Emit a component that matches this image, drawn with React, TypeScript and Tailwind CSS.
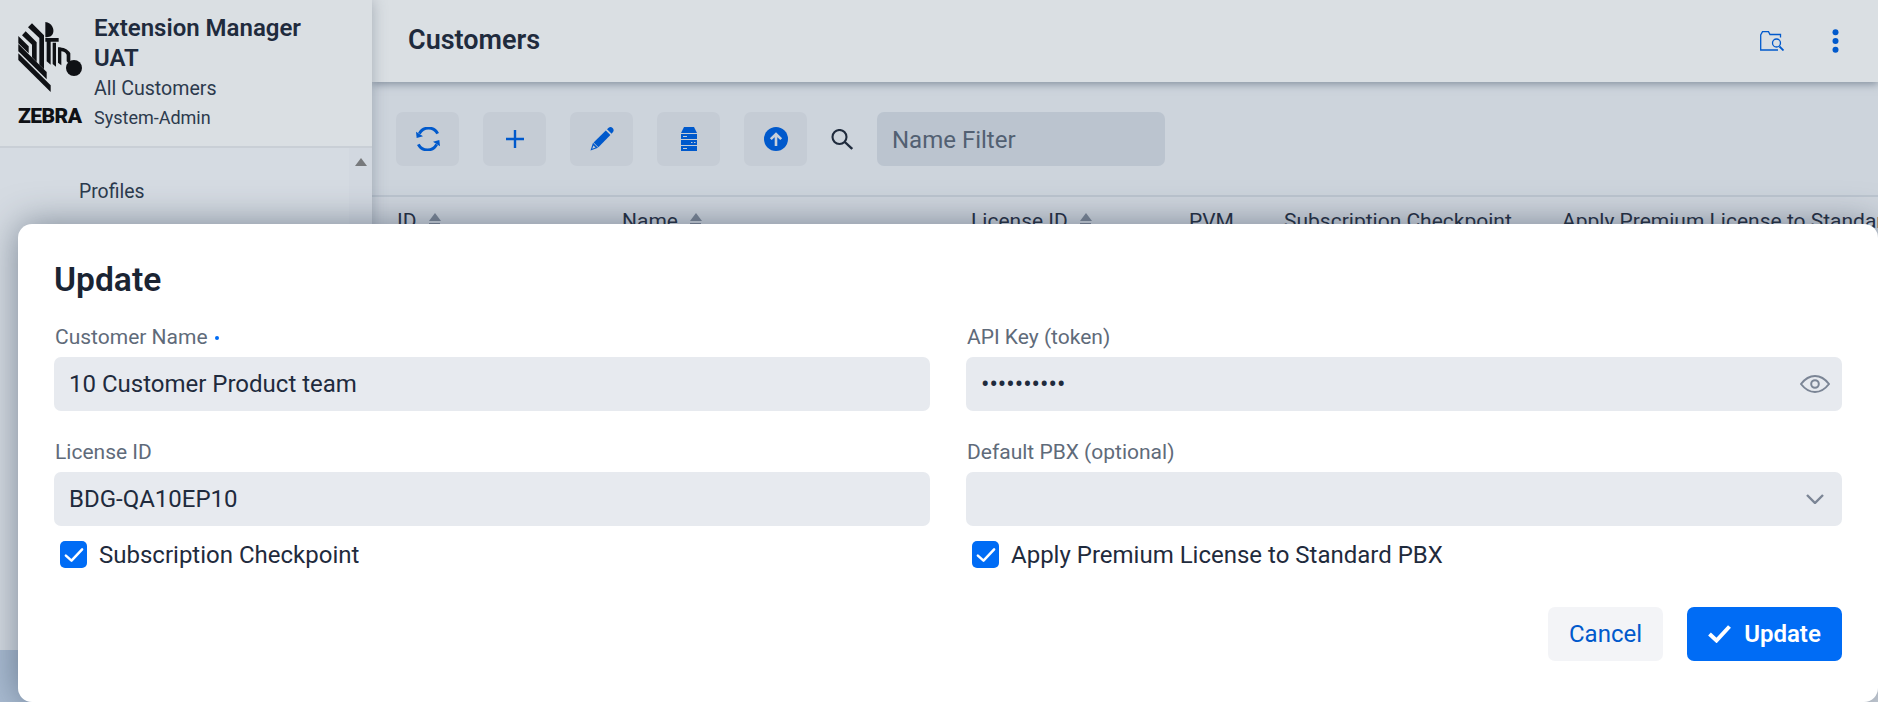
import React from 'react';

const fontRoboto = "font-['Roboto',sans-serif]";

const ZebraMark = () => (
  <svg viewBox="25 22 190 210" className="w-[64px] h-[70px]" fill="#0f1115">
    <path d="M25 116 L122 212 V232 L25 136 Z" />
    <path d="M25 88 L110 172 V194 L25 110 Z" />
    <path d="M25 64 L56 95 V116 L25 86 Z" />
    <path d="M36 62 L47 50 L80 83 V142 L66 128 V90 Z" />
    <path d="M54 38 L66 26 L102 62 V164 L88 150 V70 Z" />
    <path d="M106 22 C126 24 134 44 129 56 C125 66 118 68 106 68 Z" />
    <path d="M106 70 H146 V81 H122 V150 L110 140 V81 H106 Z" />
    <path d="M128 84 H138 V156 L128 148 Z" />
    <path d="M144 98 C160 98 174 104 181 116 V150 L170 140 V120 C166 112 160 110 154 110 V152 L144 144 Z" />
    <circle cx="192" cy="160" r="24" />
  </svg>
);

const ToolButton = ({ children }: { children: React.ReactNode }) => (
  <button className="w-[63px] h-[54px] rounded-[7px] bg-[#c5ccd5] flex items-center justify-center">
    {children}
  </button>
);

const SortHead = ({ label, w, sort }: { label: string; w: string; sort?: boolean }) => (
  <div className={`${w} shrink-0 flex items-start whitespace-nowrap`}>
    <span>{label}</span>
    {sort && (
      <span className="ml-[12px] mt-[4px] flex flex-col items-center gap-[2px]">
        <span className="w-0 h-0 border-x-[6px] border-x-transparent border-b-[8px] border-b-[#7b8595]" />
        <span className="w-[11px] h-[2px] bg-[#7b8595]" />
      </span>
    )}
  </div>
);

const Field = ({ label, required, children }: { label: string; required?: boolean; children: React.ReactNode }) => (
  <div>
    <div className="h-[24px] pl-[1px] pt-[3px] flex items-center text-[21px] text-[#5f6b7a]">
      {label}
      {required && <span className="ml-[7px] w-[4px] h-[4px] rounded-full bg-[#006cf5]" />}
    </div>
    <div className="mt-[9px] h-[54px] rounded-[7px] bg-[#e7eaef] pl-[15px] pr-[12px] flex items-center justify-between text-[24px] text-[#1f2b3d]">
      {children}
    </div>
  </div>
);

const Check = ({ label }: { label: string }) => (
  <div className="h-[27px] flex items-center pl-[6px] text-[24px] text-[#1f2b3d]">
    <span className="w-[27px] h-[27px] rounded-[5px] bg-[#006cf5] flex items-center justify-center">
      <svg viewBox="0 0 16 16" className="w-[20px] h-[20px]" fill="none" stroke="#fff" strokeWidth="2" strokeLinecap="round" strokeLinejoin="round">
        <path d="M1.5 8.5 L6 12.5 L14.5 3.5" />
      </svg>
    </span>
    <span className="ml-[12px]">{label}</span>
  </div>
);

export default function App() {
  return (
    <div className={`${fontRoboto} relative w-[1878px] h-[702px] overflow-hidden bg-[#cdd4dc] flex`}>
      <aside className="w-[372px] shrink-0 h-full bg-[#d5dbe2] flex flex-col shadow-[0_0_14px_rgba(60,75,95,0.35)] z-20">
        <div className="h-[148px] shrink-0 bg-[#dadfe3] border-b-2 border-[#c9cfd6] pl-[18px] pt-[13px] flex">
          <div className="w-[64px] shrink-0 pt-[9px] flex flex-col">
            <ZebraMark />
            <div className="mt-[14px] text-[21px] leading-[20px] font-black text-[#0f1115] tracking-[-0.5px]">ZEBRA</div>
          </div>
          <div className="ml-[12px] text-[#1f2b3d]">
            <div className="text-[24px] leading-[30px] font-semibold">Extension Manager</div>
            <div className="text-[24px] leading-[30px] font-semibold">UAT</div>
            <div className="text-[19.6px] leading-[31px] text-[#2c3a4d]">All Customers</div>
            <div className="text-[18px] leading-[28px] text-[#2c3a4d]">System-Admin</div>
          </div>
        </div>
        <div className="flex-1 flex">
          <nav className="flex-1 pl-[79px] pt-[30px] text-[19.4px] leading-[28px] text-[#2c3a4d]">
            <div>Profiles</div>
          </nav>
          <div className="w-[23px] bg-[#d2d8e0] flex justify-center pt-[10px]">
            <span className="w-0 h-0 border-x-[6px] border-x-transparent border-b-[8px] border-b-[#77797c]" />
          </div>
        </div>
        <div className="h-[52px] shrink-0 bg-[#a9bbd1]" />
      </aside>

      <main className="flex-1 min-w-0 flex flex-col">
        <header className="h-[82px] shrink-0 bg-[#dadfe3] pl-[36px] pr-[39px] flex items-center justify-between shadow-[0_2px_8px_rgba(70,85,105,0.55)] z-10">
          <h1 className="mb-[2px] text-[27px] font-semibold text-[#1f2b3d]">Customers</h1>
          <div className="flex items-center gap-[48px]">
            <svg viewBox="0 0 24 20" className="w-[24px] h-[20px]" fill="none" stroke="#0059cc" strokeWidth="1.3">
              <path d="M23.5 19.5 L19.5 15.5" strokeWidth="1.8" />
              <circle cx="16.5" cy="12" r="4" />
              <path d="M18 19 H0.7 V4 L2.5 0.7 H8.5 L10 3.5 H20.5 V6.5" />
            </svg>
            <svg viewBox="0 0 7 24" className="w-[7px] h-[24px]" fill="#0059cc">
              <circle cx="3.5" cy="3.2" r="3" />
              <circle cx="3.5" cy="12" r="3" />
              <circle cx="3.5" cy="20.8" r="3" />
            </svg>
          </div>
        </header>
        <div className="h-[115px] shrink-0 border-b-2 border-[#bcc5cf] pl-[24px] pt-[30px] flex items-start gap-[24px]">
          <ToolButton>
            <svg viewBox="0 0 72 72" className="w-[24px] h-[24px]" fill="none" stroke="#0059cc" strokeWidth="9">
              <path d="M10 20 A31 31 0 0 1 65 20" />
              <path d="M62 52 A31 31 0 0 1 7 52" />
              <polygon points="0,14 2,33 21,28" fill="#0059cc" stroke="none" />
              <polygon points="72,58 70,39 51,44" fill="#0059cc" stroke="none" />
            </svg>
          </ToolButton>
          <ToolButton>
            <svg viewBox="0 0 18 18" className="w-[18px] h-[18px]" stroke="#0059cc" strokeWidth="2.4">
              <path d="M9 0 V18 M0 9 H18" />
            </svg>
          </ToolButton>
          <ToolButton>
            <svg viewBox="0 0 24 24" className="w-[24px] h-[24px]" fill="#0059cc">
              <path d="M3.6 15.4 L15.8 3.4 L20.4 8 L8.4 20.2 Z" />
              <path d="M17 2.2 L18.6 0.8 C19.8 -0.2 21.4 -0.2 22.6 1 C23.8 2.2 24 3.8 23 5 L21.6 6.8 Z" />
              <path d="M0.5 23.5 L3 15.8 L8 20.8 Z M2.2 21.8 L5.6 20.6 L3.4 18.4 Z" fillRule="evenodd" />
            </svg>
          </ToolButton>
          <ToolButton>
            <svg viewBox="0 0 16 24" className="w-[16px] h-[24px]" fill="#0059cc">
              <path d="M3 0 H13 L16 6 H0 Z" />
              <path fillRule="evenodd" d="M0 7 H16 V12 H0 Z M2 9 V10 H6 V9 Z" />
              <path fillRule="evenodd" d="M0 13 H16 V18 H0 Z M10 15 V16 H11.5 V15 Z M13 15 V16 H14.5 V15 Z" />
              <path fillRule="evenodd" d="M0 19 H16 V24 H0 Z M2 21 V22 H6 V21 Z" />
            </svg>
          </ToolButton>
          <ToolButton>
            <svg viewBox="0 0 24 24" className="w-[24px] h-[24px]">
              <circle cx="12" cy="12" r="12" fill="#0059cc" />
              <path d="M12 19 V8 M6.8 12.2 L12 7 L17.2 12.2" fill="none" stroke="#c7d0da" strokeWidth="2.6" />
            </svg>
          </ToolButton>
          <div className="h-[54px] flex items-center">
            <svg viewBox="0 0 22 21" className="w-[22px] h-[21px]" fill="none" stroke="#1f2b3d" strokeWidth="2.1">
              <circle cx="8.5" cy="8" r="7" />
              <path d="M13.8 13 L21.2 20" strokeWidth="2.4" />
            </svg>
          </div>
          <div className="h-[54px] w-[288px] rounded-[7px] bg-[#bbc4cf] pl-[15px] pt-[1px] flex items-center text-[24px] text-[#526072]">
            Name Filter
          </div>
        </div>
        <div className="flex-1 pl-[25px] pt-[12px] flex text-[21px] leading-[24px] text-[#1f2b3d] bg-[#cfd5dd]">
          <SortHead label="ID" w="w-[225px]" sort />
          <SortHead label="Name" w="w-[349px]" sort />
          <SortHead label="License ID" w="w-[218px]" sort />
          <SortHead label="PVM" w="w-[95px]" />
          <SortHead label="Subscription Checkpoint" w="w-[278px]" />
          <SortHead label="Apply Premium License to Standard PBX" w="w-[400px]" />
        </div>
      </main>

      {/* modal dialog */}
      <div className="absolute left-[18px] top-[224px] w-[1860px] h-[478px] z-30 bg-white rounded-[14px] shadow-[0_0_36px_rgba(50,65,85,0.55)] px-[36px] pt-[36px]">
        <h2 className="text-[33.6px] leading-[40px] font-semibold text-[#1a2433]">Update</h2>
        <div className="mt-[24px] grid grid-cols-2 gap-x-[36px] gap-y-[28px]">
          <Field label="Customer Name" required>
            <span>10 Customer Product team</span>
          </Field>
          <Field label="API Key (token)">
            <span className="text-[25px] pt-[2px]">••••••••••</span>
            <svg viewBox="0 0 30 18" className="w-[30px] h-[18px]" fill="none" stroke="#7b8595" strokeWidth="2">
              <path d="M1 9 C6 2.5 10 1 15 1 C20 1 24 2.5 29 9 C24 15.5 20 17 15 17 C10 17 6 15.5 1 9 Z" />
              <circle cx="15" cy="9" r="3.8" />
            </svg>
          </Field>
          <Field label="License ID">
            <span>BDG-QA10EP10</span>
          </Field>
          <Field label="Default PBX (optional)">
            <span />
            <svg viewBox="0 0 18 10" className="w-[18px] h-[10px] mr-[6px]" fill="none" stroke="#7b8595" strokeWidth="2.4">
              <path d="M1 1 L9 9 L17 1" />
            </svg>
          </Field>
        </div>
        <div className="mt-[15px] grid grid-cols-2 gap-x-[36px]">
          <Check label="Subscription Checkpoint" />
          <Check label="Apply Premium License to Standard PBX" />
        </div>
        <div className="mt-[39px] flex justify-end gap-[24px]">
          <button className="w-[115px] h-[54px] rounded-[7px] bg-[#f3f4f7] text-[24px] text-[#0059cc]">Cancel</button>
          <button className="w-[155px] h-[54px] rounded-[7px] bg-[#006cf5] text-[24px] font-semibold text-white flex items-center justify-center gap-[13px]">
            <svg viewBox="0 0 23 18" className="w-[23px] h-[18px]" fill="none" stroke="#fff" strokeWidth="4">
              <path d="M1.5 9 L8.5 15.5 L21.5 1.5" />
            </svg>
            Update
          </button>
        </div>
      </div>
    </div>
  );
}
